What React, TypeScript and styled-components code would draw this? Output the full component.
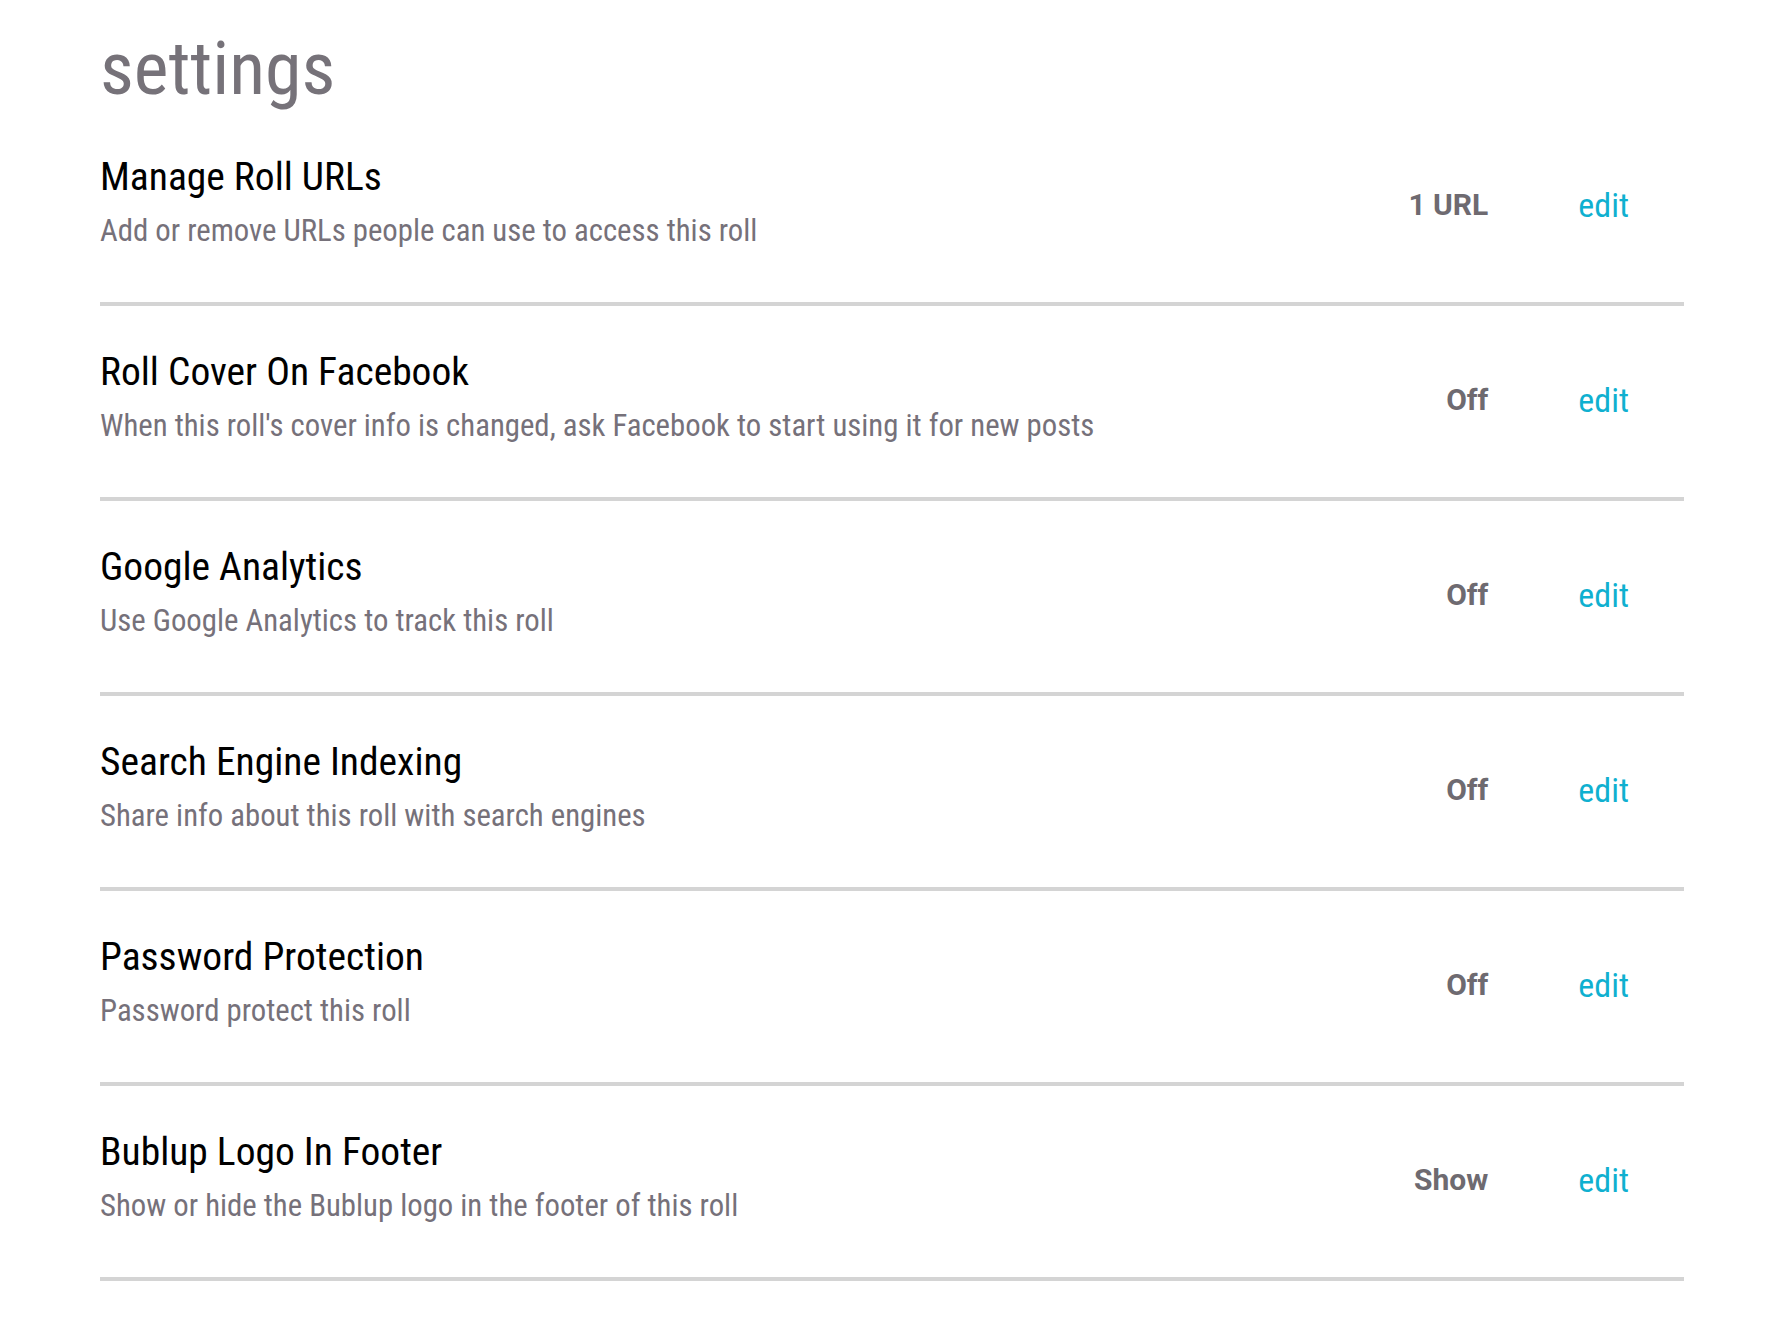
import React from 'react'
import styled, { createGlobalStyle } from 'styled-components'

const GlobalStyle = createGlobalStyle`
    html, body {
        margin: 0;
        padding: 0;
        background: #fff;
    }
    body {
        font-family: "Roboto Condensed", Roboto, "Liberation Sans", sans-serif;
    }
`

const SPage = styled.main`
    width: 1584px;
    padding: 27px 0 0 100px;
`

const SHeading = styled.h1`
    margin: 0;
    font-size: 74px;
    line-height: 84px;
    font-weight: 400;
    color: #767279;
`

const SList = styled.ul`
    list-style: none;
    margin: 0;
    padding: 0;
`

const SRow = styled.li`
    display: flex;
    align-items: center;
    height: 191px;
    padding-right: 55px;
    border-bottom: 4px solid #d4d4d4;
`

const SText = styled.div`
    flex: 1;
    align-self: flex-start;
    display: flex;
    flex-direction: column;
    padding-top: 42px;
`

const STitle = styled.h2`
    margin: 0 0 11px;
    font-size: 39.5px;
    line-height: 48px;
    font-weight: 400;
    color: #000;
`

const SDesc = styled.p`
    margin: 0;
    font-size: 30.75px;
    line-height: 38px;
    color: #76717a;
`

const SValue = styled.span`
    margin-bottom: 4px;
    font-family: Roboto, "Liberation Sans", sans-serif;
    font-size: 30px;
    font-weight: 700;
    color: #6e6a70;
    text-align: right;
`

const SEdit = styled.a`
    margin: 0 0 4px 90px;
    font-size: 34px;
    color: #0fb0d0;
    text-decoration: none;
    cursor: pointer;
`

const settings = [
    { title: 'Manage Roll URLs', desc: 'Add or remove URLs people can use to access this roll', value: '1 URL' },
    { title: 'Roll Cover On Facebook', desc: "When this roll's cover info is changed, ask Facebook to start using it for new posts", value: 'Off' },
    { title: 'Google Analytics', desc: 'Use Google Analytics to track this roll', value: 'Off' },
    { title: 'Search Engine Indexing', desc: 'Share info about this roll with search engines', value: 'Off' },
    { title: 'Password Protection', desc: 'Password protect this roll', value: 'Off' },
    { title: 'Bublup Logo In Footer', desc: 'Show or hide the Bublup logo in the footer of this roll', value: 'Show' },
]

export default function App() {
    return (
        <>
            <GlobalStyle />
            <SPage>
                <SHeading>settings</SHeading>
                <SList>
                    {settings.map((item) => (
                        <SRow key={item.title}>
                            <SText>
                                <STitle>{item.title}</STitle>
                                <SDesc>{item.desc}</SDesc>
                            </SText>
                            <SValue>{item.value}</SValue>
                            <SEdit>edit</SEdit>
                        </SRow>
                    ))}
                </SList>
            </SPage>
        </>
    )
}
